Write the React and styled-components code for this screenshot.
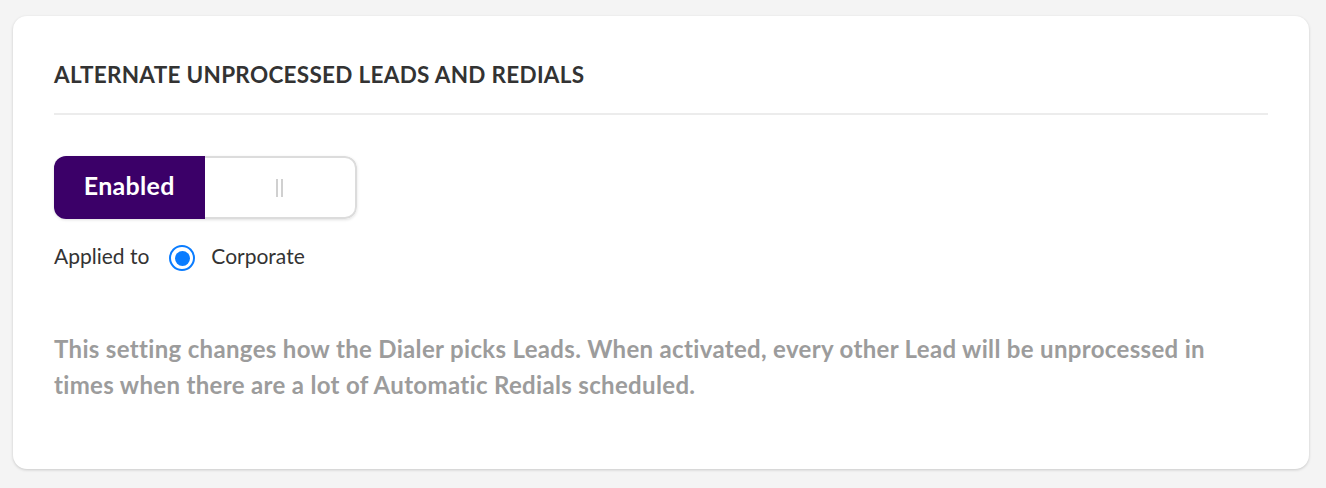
import * as React from "react";
import styled, { createGlobalStyle } from "styled-components";

const GlobalStyle = createGlobalStyle`
  html, body {
    margin: 0;
    padding: 0;
    background: #f4f4f4;
  }
  body {
    font-family: "Lato", "Open Sans", sans-serif;
  }
`;

const Page = styled.div`
  padding: 16px 17px 18px 13px;
`;

const Card = styled.section`
  box-sizing: border-box;
  width: 1296px;
  height: 453px;
  background: #fff;
  border-radius: 14px;
  box-shadow: 0 1px 3px rgba(0, 0, 0, 0.18);
  padding: 46px 41px 0 41px;
`;

const Title = styled.h2`
  margin: 0;
  font-size: 22.5px;
  font-weight: 700;
  color: #333;
  line-height: 26px;
  letter-spacing: 0.3px;
  padding-bottom: 25px;
  border-bottom: 2px solid #ececec;
`;

const Toggle = styled.div`
  display: flex;
  width: 303px;
  height: 63px;
  margin-top: 41px;
  border-radius: 12px;
  overflow: hidden;
  box-shadow: 0 1px 3px rgba(0, 0, 0, 0.12);
`;

const ToggleSide = styled.div`
  flex: 1;
  display: flex;
  align-items: center;
  justify-content: center;
  padding-bottom: ${(p) => (p.$on ? "5px" : "0")};
  font-size: 25px;
  font-weight: 700;
  letter-spacing: 0.3px;
  color: #fff;
  background: ${(p) => (p.$on ? "#3b0068" : "#fff")};
  border: ${(p) => (p.$on ? "none" : "2px solid #dcdcdc")};
  border-left: none;
  border-radius: ${(p) => (p.$on ? "0" : "0 12px 12px 0")};
`;

const Grip = styled.span`
  display: flex;
  gap: 3px;
  & > i {
    display: block;
    width: 2px;
    height: 18px;
    background: #d0d0d0;
  }
`;

const AppliedRow = styled.div`
  display: flex;
  align-items: center;
  height: 30px;
  margin-top: 21px;
  font-size: 21px;
  letter-spacing: 0;
  color: #333;
`;

const Radio = styled.span`
  box-sizing: border-box;
  width: 26px;
  height: 26px;
  border-radius: 50%;
  border: 2.5px solid #0a7cff;
  display: flex;
  align-items: center;
  justify-content: center;
  margin: 6px 16px 0 20px;
  &::after {
    content: "";
    width: 15px;
    height: 15px;
    border-radius: 50%;
    background: #0a7cff;
  }
`;

const Description = styled.p`
  margin: 61px 0 0;
  font-size: 24px;
  line-height: 36px;
  font-weight: 700;
  letter-spacing: 0.33px;
  color: #9c9c9c;
  max-width: 1180px;
`;

export default function App() {
  return (
    <Page>
      <GlobalStyle />
      <Card>
        <Title>ALTERNATE UNPROCESSED LEADS AND REDIALS</Title>
        <Toggle>
          <ToggleSide $on>Enabled</ToggleSide>
          <ToggleSide>
            <Grip>
              <i />
              <i />
            </Grip>
          </ToggleSide>
        </Toggle>
        <AppliedRow>
          <span>Applied to</span>
          <Radio />
          <span>Corporate</span>
        </AppliedRow>
        <Description>
          This setting changes how the Dialer picks Leads. When activated, every other Lead will be
          unprocessed in times when there are a lot of Automatic Redials scheduled.
        </Description>
      </Card>
    </Page>
  );
}
